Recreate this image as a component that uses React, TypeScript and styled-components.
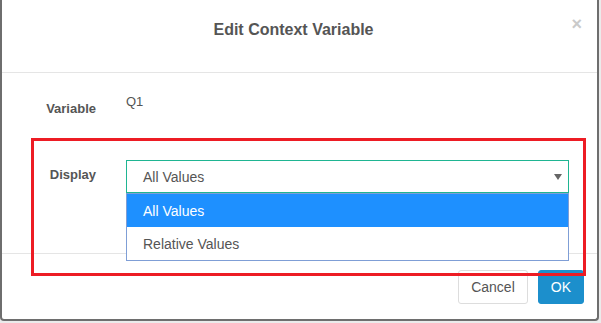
import React from "react";
import styled, { createGlobalStyle } from "styled-components";

const Global = createGlobalStyle`
  html, body { margin: 0; padding: 0; background: #ebebeb; }
  body { font-family: "Liberation Sans", Arial, sans-serif; }
  * { box-sizing: border-box; }
`;

const Dialog = styled.div`
  position: relative;
  width: 599px;
  height: 321px;
  background: #fff;
  border: 2px solid #6e6e6e;
  border-top: none;
  border-radius: 0 0 4px 4px;
  display: flex;
  flex-direction: column;
`;

const Header = styled.div`
  position: relative;
  height: 73px;
  border-bottom: 1px solid #e5e5e5;
  padding: 21px 12px 0 0;
  text-align: center;
`;

const Title = styled.h4`
  margin: 0;
  font-size: 16px;
  line-height: 18px;
  font-weight: bold;
  color: #555;
`;

const Close = styled.span`
  position: absolute;
  right: 15px;
  top: 13px;
  font-size: 18px;
  line-height: 22px;
  font-weight: bold;
  color: #cacaca;
`;

const Body = styled.div`
  height: 181px;
  border-bottom: 1px solid #e5e5e5;
  padding-top: 21px;
`;

const FormRow = styled.div`
  display: grid;
  grid-template-columns: 94px 443px;
  column-gap: 30px;
  min-height: 33px;
  margin-bottom: 33px;
  align-items: start;
`;

const Label = styled.label`
  padding-top: 7px;
  text-align: right;
  font-size: 13px;
  line-height: 16px;
  font-weight: bold;
  color: #555;
`;

const Static = styled.div`
  font-size: 13px;
  line-height: 16px;
  color: #555;
`;

const SelectWrap = styled.div`
  position: relative;
`;

const SelectBox = styled.div`
  height: 33px;
  border: 1px solid #1fb592;
  padding: 0 16px;
  display: flex;
  align-items: center;
  justify-content: space-between;
  font-size: 14px;
  color: #555;
`;

const Arrow = styled.span`
  width: 0;
  height: 0;
  margin-right: -10px;
  margin-top: 1px;
  border-left: 4px solid transparent;
  border-right: 4px solid transparent;
  border-top: 6px solid #666;
`;

const Menu = styled.div`
  position: absolute;
  left: 0;
  right: 0;
  top: 33px;
  background: #fff;
  border: 1px solid #7f9ed6;
  z-index: 2;
`;

const Option = styled.div<{ $active?: boolean }>`
  height: 33px;
  padding: 0 16px;
  display: flex;
  align-items: center;
  font-size: 14px;
  background: ${(p) => (p.$active ? "#1e90ff" : "#fff")};
  color: ${(p) => (p.$active ? "#fff" : "#555")};
`;

const Footer = styled.div`
  display: flex;
  justify-content: flex-end;
  gap: 10px;
  padding: 16px 13px 0 0;
`;

const Button = styled.button<{ $primary?: boolean }>`
  height: 34px;
  padding: 0 12px;
  border-radius: 3px;
  font-family: "Liberation Sans", Arial, sans-serif;
  font-size: 14px;
  border: 1px solid ${(p) => (p.$primary ? "#1c8fcc" : "#ddd")};
  background: ${(p) => (p.$primary ? "#1c8fcc" : "#fff")};
  color: ${(p) => (p.$primary ? "#fff" : "#555")};
`;

const Highlight = styled.div`
  position: absolute;
  left: 29px;
  top: 138px;
  width: 555px;
  height: 138px;
  border: 3px solid #ed1c24;
  pointer-events: none;
  z-index: 3;
`;

export default function App() {
  return (
    <>
      <Global />
      <Dialog>
        <Header>
          <Title>Edit Context Variable</Title>
          <Close>×</Close>
        </Header>
        <Body>
          <FormRow>
            <Label>Variable</Label>
            <Static>Q1</Static>
          </FormRow>
          <FormRow>
            <Label>Display</Label>
            <SelectWrap>
              <SelectBox>
                <span>All Values</span>
                <Arrow />
              </SelectBox>
              <Menu>
                <Option $active>All Values</Option>
                <Option>Relative Values</Option>
              </Menu>
            </SelectWrap>
          </FormRow>
        </Body>
        <Footer>
          <Button>Cancel</Button>
          <Button $primary>OK</Button>
        </Footer>
        <Highlight />
      </Dialog>
    </>
  );
}
